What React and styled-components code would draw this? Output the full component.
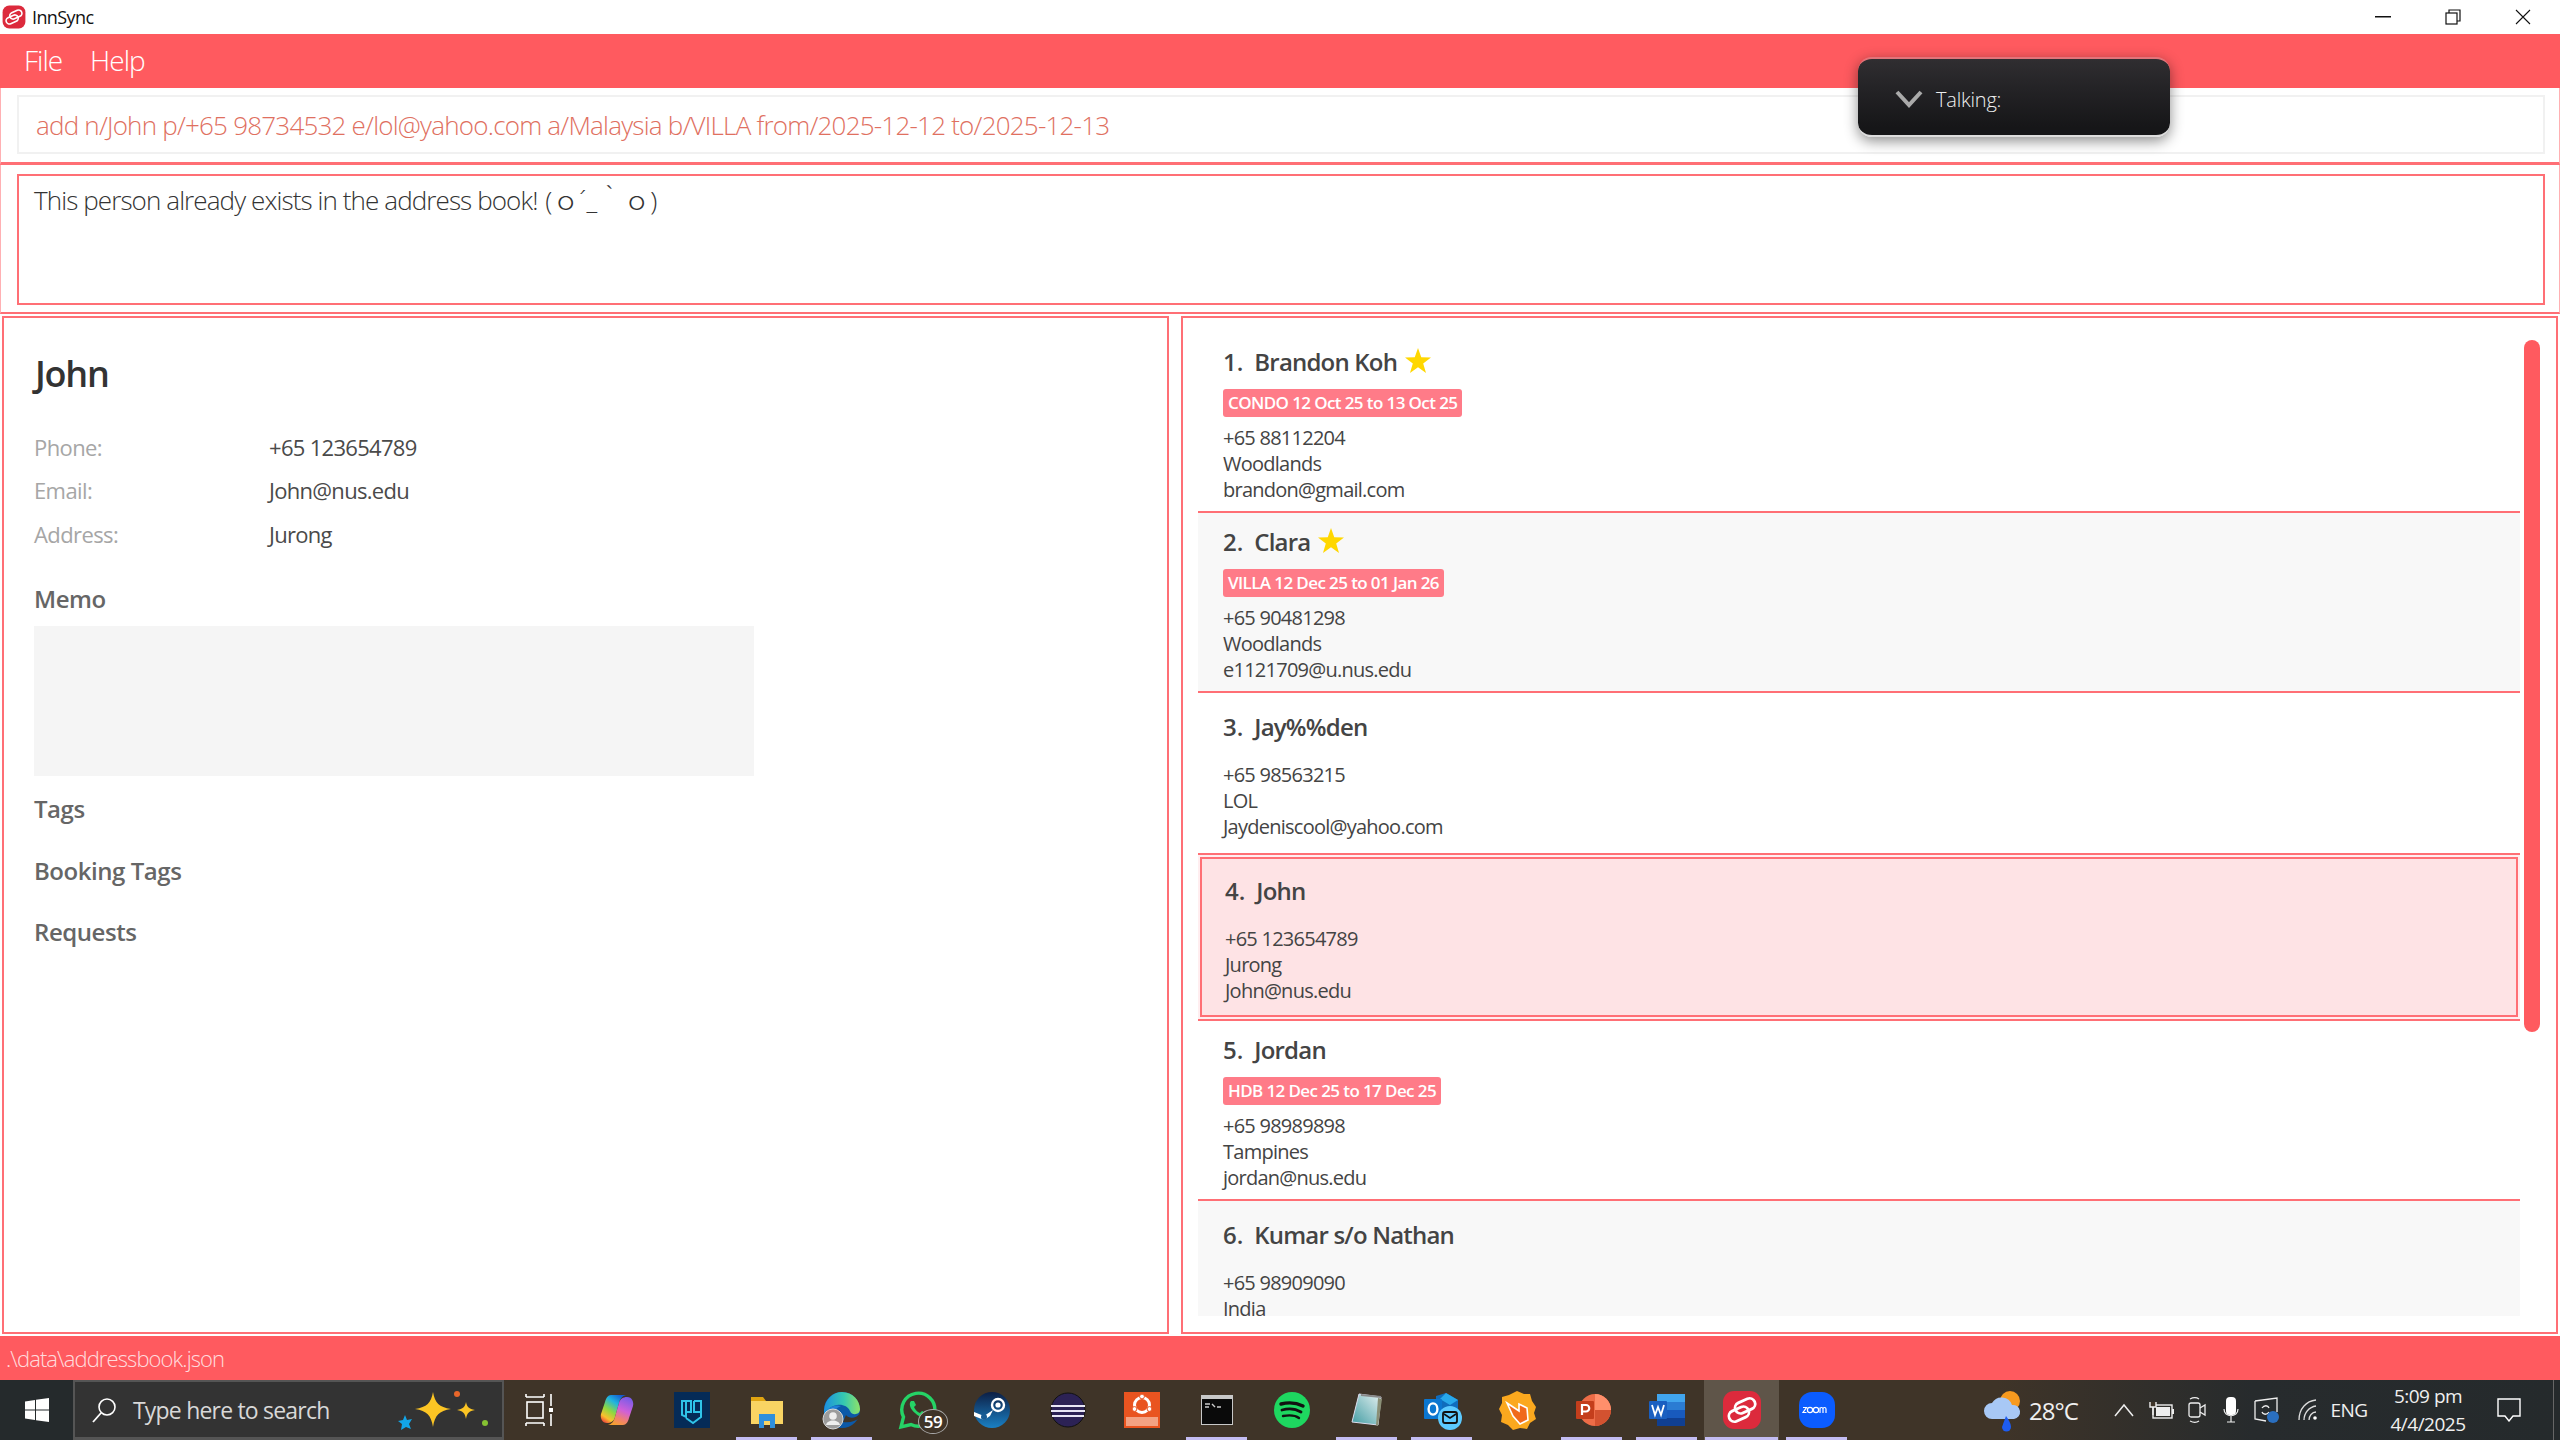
import React from "react";
import styled, { createGlobalStyle } from "styled-components";

const RED = "#ff5a5f";
const LINE = "#ff6f75";
const UI = '"Open Sans", "Noto Sans CJK JP", sans-serif';

const GlobalStyle = createGlobalStyle`
  html, body { margin: 0; padding: 0; background: #fff; }
  * { box-sizing: border-box; }
`;

const people = [
  { name: "Brandon Koh", star: true, badge: "CONDO 12 Oct 25 to 13 Oct 25", lines: ["+65 88112204", "Woodlands", "brandon@gmail.com"] },
  { name: "Clara", star: true, badge: "VILLA 12 Dec 25 to 01 Jan 26", lines: ["+65 90481298", "Woodlands", "e1121709@u.nus.edu"] },
  { name: "Jay%%den", lines: ["+65 98563215", "LOL", "Jaydeniscool@yahoo.com"] },
  { name: "John", selected: true, lines: ["+65 123654789", "Jurong", "John@nus.edu"] },
  { name: "Jordan", badge: "HDB 12 Dec 25 to 17 Dec 25", lines: ["+65 98989898", "Tampines", "jordan@nus.edu"] },
  { name: "Kumar s/o Nathan", lines: ["+65 98909090", "India"] },
];

const Page = styled.div`
  position: relative;
  width: 2560px;
  height: 1440px;
  overflow: hidden;
  display: flex;
  flex-direction: column;
  background: #fff;
  font-family: ${UI};
`;

const TitleBar = styled.div`
  height: 34px;
  display: flex;
  align-items: center;
  padding-left: 2px;
  font-size: 18px;
  color: #111;
`;

const AppName = styled.span`
  margin-left: 6px;
  letter-spacing: -0.6px;
`;

const WindowButtons = styled.div`
  margin-left: auto;
  margin-right: 2px;
  display: flex;
`;

const WindowButton = styled.div`
  width: 70px;
  height: 34px;
  display: flex;
  align-items: center;
  justify-content: center;
`;

const MenuBar = styled.div`
  height: 54px;
  background: ${RED};
  display: flex;
  align-items: center;
  gap: 28px;
  padding: 0 0 2px 24px;
  font-size: 28px;
  font-weight: 300;
  color: #fff;
  letter-spacing: -1px;
`;

const CommandPanel = styled.div`
  height: 77px;
  padding: 7px 14px 0 16px;
  border-left: 1px solid #ffb0b3;
  border-right: 1px solid #ffb0b3;
  border-bottom: 3px solid ${LINE};
`;

const CommandBox = styled.div`
  height: 59px;
  border: 2px solid #f1f1f1;
  display: flex;
  align-items: center;
  padding-left: 17px;
  font-size: 26px;
  font-weight: 300;
  color: #e0705f;
  letter-spacing: -0.78px;
  white-space: nowrap;
`;

const ResultPanel = styled.div`
  height: 149px;
  padding: 9px 14px 0 16px;
  border-left: 1px solid #ffb0b3;
  border-right: 1px solid #ffb0b3;
  border-bottom: 2px solid ${LINE};
`;

const ResultBox = styled.div`
  height: 131px;
  border: 2px solid ${LINE};
  padding: 6px 0 0 15px;
  font-size: 26px;
  line-height: 36px;
  font-weight: 300;
  color: #333;
  letter-spacing: -0.9px;
`;

const Kaomoji = styled.span`
  letter-spacing: 0.4px;
  margin-left: 2px;
`;

const Split = styled.div`
  height: 1022px;
  padding: 2px;
  display: flex;
  gap: 12px;
`;

const Panel = styled.div`
  width: ${(p) => p.$width}px;
  height: 1018px;
  border: 2px solid ${LINE};
`;

const Details = styled(Panel)`
  padding: 36px 0 0 30px;
`;

const DetailName = styled.div`
  font-size: 36px;
  line-height: 40px;
  font-weight: 600;
  color: #333;
  letter-spacing: -1.2px;
  margin-left: 1px;
`;

const Fields = styled.div`
  margin-top: 31px;
  margin-bottom: 23px;
`;

const Field = styled.div`
  display: flex;
  height: 43.5px;
  align-items: center;
  font-size: 22px;
`;

const FieldLabel = styled.span`
  width: 235px;
  color: #a6a6a6;
  font-weight: 500;
  letter-spacing: -0.6px;
`;

const FieldValue = styled.span`
  color: #4a4a4a;
  font-weight: 400;
  letter-spacing: -0.7px;
`;

const Heading = styled.div`
  font-size: 24px;
  line-height: 40px;
  font-weight: 600;
  color: #666;
  letter-spacing: -0.45px;
  margin-top: ${(p) => p.$top || 0}px;
`;

const MemoBox = styled.div`
  width: 720px;
  height: 150px;
  margin-top: 7px;
  background: #f5f5f5;
`;

const ListPanel = styled(Panel)`
  display: flex;
  padding: 15px 0 0 15px;
`;

const Viewport = styled.div`
  width: 1322px;
  height: 983px;
  overflow: hidden;
`;

const Card = styled.div`
  padding: ${(p) => (p.$selected ? "15px 0 15px 27px" : p.$badge ? "8px 0 8px 25px" : "13px 0 13px 25px")};
  background: ${(p) => (p.$selected ? "#fee3e5" : p.$odd ? "#f8f8f8" : "#fff")};
  border-bottom: 2px solid ${LINE};
  box-shadow: ${(p) => (p.$selected ? `inset 0 0 0 2px #ffeef0, inset 0 0 0 4px ${LINE}, inset 0 2px 0 0 ${LINE}` : "none")};
`;

const NameRow = styled.div`
  height: 40px;
  display: flex;
  align-items: center;
  font-size: 24px;
  font-weight: 600;
  color: #444;
  letter-spacing: -0.8px;
`;

const Index = styled.span`
  margin-right: 11px;
  letter-spacing: 0;
`;

const StarIcon = styled.svg`
  width: 26px;
  height: 26px;
  margin-left: 8px;
`;

const Badge = styled.div`
  display: table;
  height: 28px;
  margin-top: 8px;
  padding: 0 5px;
  border-radius: 3px;
  background: #ff7b88;
  color: #fff;
  font-size: 17px;
  line-height: 28px;
  font-weight: 600;
  letter-spacing: -0.6px;
  white-space: nowrap;
`;

const Lines = styled.div`
  margin-top: ${(p) => (p.$badge ? 8 : 16)}px;
  font-size: 20px;
  line-height: 26px;
  color: #444;
  letter-spacing: -0.75px;
`;

const Track = styled.div`
  margin: 7px 0 0 4px;
  width: 16px;
`;

const Thumb = styled.div`
  height: 692px;
  border-radius: 8px;
  background: ${RED};
`;

const StatusBar = styled.div`
  height: 44px;
  background: ${RED};
  display: flex;
  align-items: center;
  padding-left: 6px;
  font-size: 22px;
  font-weight: 300;
  color: rgba(255, 255, 255, 0.8);
  letter-spacing: -0.9px;
`;

const Taskbar = styled.div`
  height: 60px;
  display: flex;
  background: linear-gradient(90deg, #252a2c 0, #252a2c 3%, #3f3428 20%, #3f3428 78%, #272b2d 88%, #252a2c 100%);
`;

const Start = styled.div`
  width: 73px;
  display: flex;
  align-items: center;
  justify-content: center;
`;

const Search = styled.div`
  width: 431px;
  display: flex;
  align-items: center;
  padding-left: 16px;
  gap: 16px;
  background: #333;
  border: 2px solid #555;
  border-bottom-width: 3px;
  color: #d8d8d8;
  font-size: 23px;
  letter-spacing: -0.8px;
`;

const Sparkles = styled.svg`
  margin-left: auto;
  margin-right: 9px;
`;

const Slot = styled.div`
  position: relative;
  width: 75px;
  display: flex;
  align-items: center;
  justify-content: center;
  background: ${(p) => (p.$active ? "#5f5549" : "transparent")};

  &::after {
    content: "";
    display: ${(p) => (p.$running || p.$active ? "block" : "none")};
    position: absolute;
    bottom: 0;
    left: ${(p) => (p.$active ? 1 : 7)}px;
    right: ${(p) => (p.$active ? 1 : 7)}px;
    height: 3px;
    background: #c3bcf2;
  }
`;

const CountBadge = styled.span`
  position: absolute;
  left: 39px;
  top: 29px;
  width: 30px;
  height: 25px;
  border-radius: 50%;
  border: 1px solid #aaa;
  background: #3f3428;
  color: #fff;
  font-size: 17px;
  font-weight: 600;
  line-height: 23px;
  text-align: center;
  letter-spacing: -0.5px;
`;

const Tray = styled.div`
  margin-left: auto;
  display: flex;
  color: #f0f0f0;
`;

const TrayItem = styled.div`
  width: ${(p) => p.$w}px;
  display: flex;
  align-items: center;
  justify-content: center;
  font-size: ${(p) => p.$size || 20}px;
  letter-spacing: -0.5px;
`;

const WeatherItem = styled(TrayItem)`
  justify-content: flex-start;
  gap: 6px;
  font-size: 24px;
  letter-spacing: -1px;
`;

const Clock = styled(TrayItem)`
  flex-direction: column;
  font-size: 19px;
  line-height: 28px;
`;

const ShowDesktop = styled.div`
  width: 32px;
  position: relative;

  &::after {
    content: "";
    position: absolute;
    right: 6px;
    top: 0;
    bottom: 0;
    width: 1px;
    background: #666;
  }
`;

const TalkingPill = styled.div`
  position: absolute;
  left: 1858px;
  top: 57px;
  width: 312px;
  height: 80px;
  display: flex;
  align-items: center;
  gap: 13px;
  padding: 4px 0 0 37px;
  border-radius: 14px;
  border-top: 2px solid #e2747a;
  border-bottom: 2px solid #ddd;
  background: linear-gradient(180deg, #302e31 0, #252427 35%, #161618 90%);
  box-shadow: 0 4px 14px rgba(0, 0, 0, 0.45);
  color: #eee;
  font-size: 20px;
  font-weight: 300;
  letter-spacing: -0.2px;
`;

const Logo = ({ size = 24 }) => (
  <svg width={size} height={size} viewBox="0 0 40 40">
    <rect x="1" y="1" width="38" height="38" rx="11" fill="#dc2a3c" />
    <g fill="none" stroke="#fff" strokeWidth="2.8" transform="rotate(-24 20 20)">
      <rect x="5" y="17" width="21" height="11" rx="5.500" />
      <rect x="14" y="12" width="21" height="11" rx="5.500" />
    </g>
  </svg>
);

const Star = () => (
  <StarIcon viewBox="0 0 24 24">
    <polygon fill="#ffd700" points="12,0 15,8.6 24,8.8 16.8,14.3 19.4,23 12,17.8 4.6,23 7.2,14.3 0,8.8 9,8.6" />
  </StarIcon>
);

const Icon = ({ children, w = 40, h = 40 }) => (
  <svg width={w} height={h} viewBox={`0 0 ${w} ${h}`}>
    {children}
  </svg>
);

const PersonCard = ({ person, index }) => (
  <Card $badge={!!person.badge} $selected={person.selected} $odd={index % 2 === 1}>
    <NameRow>
      <Index>{index + 1}.</Index>
      {person.name}
      {person.star && <Star />}
    </NameRow>
    {person.badge && <Badge>{person.badge}</Badge>}
    <Lines $badge={!!person.badge}>
      {person.lines.map((line) => (
        <div key={line}>{line}</div>
      ))}
    </Lines>
  </Card>
);

const appIcons = [
  {
    key: "taskview",
    icon: (
      <Icon>
        <g fill="none" stroke="#fff" strokeWidth="1.6">
          <path d="M4 7h18M4 4v3M22 4v3M4 33h18M4 36v-3M22 36v-3" />
          <rect x="5" y="12" width="16" height="16" />
          <path d="M29 4v12M29 24v12" />
        </g>
        <rect x="27" y="18" width="4" height="4" fill="#fff" />
      </Icon>
    ),
  },
  {
    key: "copilot",
    icon: (
      <Icon>
        <defs>
          <linearGradient id="cpA" x1="0.8" y1="0" x2="0.2" y2="1">
            <stop offset="0" stopColor="#1457d0" />
            <stop offset="0.3" stopColor="#20b4e0" />
            <stop offset="0.6" stopColor="#8ed840" />
            <stop offset="0.85" stopColor="#fbc02d" />
            <stop offset="1" stopColor="#f0523a" />
          </linearGradient>
          <linearGradient id="cpB" x1="0.7" y1="0" x2="0.3" y2="1">
            <stop offset="0" stopColor="#7a5ce8" />
            <stop offset="0.45" stopColor="#d060d8" />
            <stop offset="0.75" stopColor="#f08070" />
            <stop offset="1" stopColor="#f5a030" />
          </linearGradient>
        </defs>
        <path d="M14 5H29C25 6 23 9 22 13L18 27C17 31 14 33 10 33C5 33 3 28 4 24L8 12C9 8 11 5 14 5Z" fill="url(#cpA)" />
        <path d="M26 35H11C15 34 17 31 18 27L22 13C23 9 26 7 30 7C35 7 37 12 36 16L32 28C31 32 29 35 26 35Z" fill="url(#cpB)" />
      </Icon>
    ),
  },
  {
    key: "powertoys",
    icon: (
      <Icon>
        <rect x="2" y="2" width="36" height="36" fill="#052b57" />
        <path d="M10 11v14l4 2V11zM12 11h7v11h-5M22 11h7v16l-8 6-7-5M22 11v11h6" fill="none" stroke="#2fc4e8" strokeWidth="2" />
      </Icon>
    ),
  },
  {
    key: "explorer",
    running: true,
    icon: (
      <Icon>
        <path d="M4 7h12l3 4v8H4z" fill="#e0a411" />
        <path d="M4 11h32v23H4z" fill="#f9d463" />
        <path d="M12 24h16v14h-5v-7h-6v7h-5z" fill="#2e8fdc" />
        <rect x="17" y="31" width="6" height="4" fill="#f9d463" />
      </Icon>
    ),
  },
  {
    key: "edge",
    running: true,
    icon: (
      <Icon>
        <defs>
          <linearGradient id="ed" x1="0" y1="0.5" x2="1" y2="0.5">
            <stop offset="0" stopColor="#1c8fe0" />
            <stop offset="0.55" stopColor="#35c8b0" />
            <stop offset="1" stopColor="#8fe268" />
          </linearGradient>
        </defs>
        <circle cx="20" cy="20" r="18" fill="#0c59a8" />
        <path d="M2 20C3 9 11 2 20 2C31 2 38 11 38 19C38 25 30 26 28 21C26 16 20 14 15 15C9 16 4 20 2 26Z" fill="url(#ed)" />
        <path d="M38 23C34 29 27 29 24 25L21 32C28 33 34 31 37 28Z" fill="#3f3428" />
        <path d="M2 25C5 18 12 14 19 16C13 18 11 23 13 30L5 32Z" fill="#1f7fd8" />
        <circle cx="11" cy="29" r="10" fill="#9c9c9c" stroke="#d8d8d8" />
        <circle cx="11" cy="26" r="3.800" fill="#eee" />
        <path d="M4 35c1-6 13-6 14 0z" fill="#eee" />
      </Icon>
    ),
  },
  {
    key: "whatsapp",
    badge: "59",
    icon: (
      <Icon>
        <path d="M4 37l2.500-10A16.500 16.500 0 1 1 14 34.500z" fill="none" stroke="#25d366" strokeWidth="3.4" />
        <path d="M14 11c-3 3 0 9 4 12 4 4 8 5 10 3l1-3-4-2-2 2c-3-1-5-4-6-6l2-2-2-4z" fill="#25d366" />
      </Icon>
    ),
  },
  {
    key: "steam",
    icon: (
      <Icon>
        <defs>
          <linearGradient id="st" x1="0" y1="0" x2="0" y2="1">
            <stop offset="0" stopColor="#0d1f45" />
            <stop offset="1" stopColor="#1a80c4" />
          </linearGradient>
        </defs>
        <circle cx="20" cy="20" r="18" fill="url(#st)" />
        <circle cx="26" cy="15" r="6" fill="none" stroke="#fff" strokeWidth="2.4" />
        <circle cx="26" cy="15" r="2.600" fill="#fff" />
        <path d="M2 22l10 4 9-6-3 6-6 4-10-4z" fill="#fff" />
        <circle cx="12" cy="27" r="3" fill="#1a5c94" />
      </Icon>
    ),
  },
  {
    key: "eclipse",
    icon: (
      <Icon>
        <path d="M19 2a18 18 0 0 0 0 36 17 17 0 0 1 0-36z" fill="#f7941e" />
        <circle cx="21" cy="20" r="17" fill="#2c2255" stroke="#111" />
        <path d="M4 15h34v2H4zM4 20h34v2H4zM5 25h32v2H5z" fill="#e8e6f4" />
      </Icon>
    ),
  },
  {
    key: "ubuntu",
    icon: (
      <Icon>
        <rect x="2" y="2" width="36" height="36" fill="#e95420" />
        <circle cx="20" cy="15" r="7.500" fill="none" stroke="#fff" strokeWidth="3" />
        <circle cx="20" cy="6.500" r="2.400" fill="#fff" stroke="#e95420" />
        <circle cx="12.500" cy="19" r="2.400" fill="#fff" stroke="#e95420" />
        <circle cx="27.500" cy="19" r="2.400" fill="#fff" stroke="#e95420" />
        <rect x="4" y="27" width="32" height="9" fill="#f3a283" />
      </Icon>
    ),
  },
  {
    key: "cmd",
    running: true,
    icon: (
      <Icon>
        <rect x="4" y="5" width="32" height="30" fill="#c8c8c8" />
        <rect x="5" y="9" width="30" height="25" fill="#0a0a0a" />
        <path d="M8 14h5M8 17h4M15 14l3 3M20 17h4" stroke="#ccc" strokeWidth="1.4" fill="none" />
      </Icon>
    ),
  },
  {
    key: "spotify",
    icon: (
      <Icon>
        <circle cx="20" cy="20" r="18" fill="#1ed760" />
        <g fill="none" stroke="#111" strokeLinecap="round">
          <path d="M9 14c8-2 16-1 22 2" strokeWidth="3.4" />
          <path d="M10 20c7-2 14-1 19 2" strokeWidth="2.8" />
          <path d="M11 26c6-1 12-1 16 2" strokeWidth="2.4" />
        </g>
      </Icon>
    ),
  },
  {
    key: "notepad",
    running: true,
    icon: (
      <Icon>
        <defs>
          <linearGradient id="np" x1="0" y1="1" x2="1" y2="0">
            <stop offset="0" stopColor="#3f9ba2" />
            <stop offset="1" stopColor="#e8f2f2" />
          </linearGradient>
        </defs>
        <path d="M12 4l22 3-3 28-26-3z" fill="url(#np)" stroke="#dde" />
        <path d="M14 5l20 2" stroke="#888" strokeWidth="2" />
        <path d="M31 8l4 1-4 27-2-1z" fill="#8a8f76" />
      </Icon>
    ),
  },
  {
    key: "outlook",
    running: true,
    icon: (
      <Icon>
        <path d="M14 6l10-3 12 7v14L22 30 14 24z" fill="#0f6cbd" />
        <path d="M24 3l12 7-8 5-10-6z" fill="#28a8ea" />
        <rect x="2" y="9" width="18" height="20" rx="1" fill="#0b76d0" />
        <ellipse cx="11" cy="19" rx="4.400" ry="5.600" fill="none" stroke="#fff" strokeWidth="2.4" />
        <circle cx="28" cy="28" r="12" fill="#5ccaff" />
        <rect x="21" y="22" width="14" height="11" rx="2" fill="none" stroke="#111" strokeWidth="1.8" />
        <path d="M22 24l6 4 6-4" fill="none" stroke="#111" strokeWidth="1.6" />
      </Icon>
    ),
  },
  {
    key: "hand",
    icon: (
      <Icon>
        <path d="M20 1l7 3 6 0 2 7 4 6-2 6 2 6-6 4-3 6-7-1-7 2-5-5-7-3 1-7-3-6 3-6 0-6 7-2z" fill="#fba81e" />
        <path d="M10 13l12 8 0-7 8 4 1 12-8 4-7-8z" fill="#f06a1c" stroke="#fff" strokeWidth="1.6" />
      </Icon>
    ),
  },
  {
    key: "powerpoint",
    running: true,
    icon: (
      <Icon>
        <circle cx="23" cy="20" r="16" fill="#ed6c47" />
        <path d="M23 4a16 16 0 0 1 16 16H23z" fill="#ff8f6b" />
        <path d="M23 20h16a16 16 0 0 1-16 16z" fill="#d35230" />
        <rect x="4" y="11" width="18" height="18" rx="1" fill="#c43e1c" />
        <path d="M10 25V15h4a3 3 0 0 1 0 6.500h-4" fill="none" stroke="#fff" strokeWidth="2.2" />
      </Icon>
    ),
  },
  {
    key: "word",
    running: true,
    icon: (
      <Icon>
        <rect x="10" y="4" width="28" height="8" fill="#41a5ee" />
        <rect x="10" y="12" width="28" height="8" fill="#2b7cd3" />
        <rect x="10" y="20" width="28" height="8" fill="#185abd" />
        <rect x="10" y="28" width="28" height="8" fill="#103f91" />
        <rect x="2" y="11" width="18" height="18" rx="1" fill="#1a5fc0" />
        <path d="M5 15l3 10 3-8 3 8 3-10" fill="none" stroke="#fff" strokeWidth="1.8" />
      </Icon>
    ),
  },
  { key: "innsync", active: true, icon: <Logo size={40} /> },
  {
    key: "zoom",
    running: true,
    icon: (
      <Icon>
        <rect x="2" y="2" width="36" height="36" rx="13" fill="#0b5cff" />
        <circle cx="13" cy="20" r="2.600" fill="none" stroke="#fff" strokeWidth="1.2" />
        <circle cx="19" cy="20" r="2.600" fill="none" stroke="#fff" strokeWidth="1.2" />
        <path d="M6 17.500h3.500L6 22.500h3.500M23 23v-5.500M23 19c0-2 3-2 3 0v4M26 19c0-2 3-2 3 0v4" fill="none" stroke="#fff" strokeWidth="1.2" />
      </Icon>
    ),
  },
];

const App = () => (
  <Page>
    <GlobalStyle />
    <TitleBar>
      <Logo />
      <AppName>InnSync</AppName>
      <WindowButtons>
        <WindowButton>
          <svg width="16" height="2"><rect width="16" height="1.5" fill="#111" /></svg>
        </WindowButton>
        <WindowButton>
          <svg width="16" height="16" viewBox="0 0 16 16">
            <g fill="none" stroke="#111" strokeWidth="1.2">
              <rect x="1" y="4" width="11" height="11" fill="#fff" />
              <path d="M4 4V1h11v11h-3" />
            </g>
          </svg>
        </WindowButton>
        <WindowButton>
          <svg width="16" height="16" viewBox="0 0 16 16">
            <path d="M1 1l14 14M15 1L1 15" fill="none" stroke="#111" strokeWidth="1.1" />
          </svg>
        </WindowButton>
      </WindowButtons>
    </TitleBar>
    <MenuBar>
      <span>File</span>
      <span>Help</span>
    </MenuBar>
    <CommandPanel>
      <CommandBox>add n/John p/+65 98734532 e/lol@yahoo.com a/Malaysia b/VILLA from/2025-12-12 to/2025-12-13</CommandBox>
    </CommandPanel>
    <ResultPanel>
      <ResultBox>This person already exists in the address book! <Kaomoji>(ｏ´_｀ｏ)</Kaomoji></ResultBox>
    </ResultPanel>
    <Split>
      <Details $width={1167}>
        <DetailName>John</DetailName>
        <Fields>
          <Field><FieldLabel>Phone:</FieldLabel><FieldValue>+65 123654789</FieldValue></Field>
          <Field><FieldLabel>Email:</FieldLabel><FieldValue>John@nus.edu</FieldValue></Field>
          <Field><FieldLabel>Address:</FieldLabel><FieldValue>Jurong</FieldValue></Field>
        </Fields>
        <Heading>Memo</Heading>
        <MemoBox />
        <Heading $top={13}>Tags</Heading>
        <Heading $top={22}>Booking Tags</Heading>
        <Heading $top={21}>Requests</Heading>
      </Details>
      <ListPanel $width={1377}>
        <Viewport>
          {people.map((person, index) => (
            <PersonCard key={person.name} person={person} index={index} />
          ))}
        </Viewport>
        <Track><Thumb /></Track>
      </ListPanel>
    </Split>
    <StatusBar>.\data\addressbook.json</StatusBar>
    <Taskbar>
      <Start>
        <svg width="24" height="24" viewBox="0 0 24 24">
          <path d="M0 3.400l10-1.400v9.400H0zM11 1.800L24 0v11.400H11zM0 12.600h10V22L0 20.600zM11 12.600h13V24l-13-1.800z" fill="#fff" />
        </svg>
      </Start>
      <Search>
        <svg width="26" height="26" viewBox="0 0 26 26">
          <circle cx="16" cy="10" r="8" fill="none" stroke="#fff" strokeWidth="1.6" />
          <path d="M10 16L2 25" stroke="#fff" strokeWidth="1.8" />
        </svg>
        <span>Type here to search</span>
        <Sparkles width="96" height="54" viewBox="0 0 96 54">
          <path d="M36 9c2 11 6 15 18 17-12 2-16 6-18 18-2-12-6-16-18-18 12-2 16-6 18-17z" fill="#fcc524" />
          <path d="M69 19c1 5 3 7 9 8-6 1-8 3-9 9-1-6-3-8-9-9 6-1 8-3 9-8z" fill="#fcc524" />
          <path d="M8 32l2 5 5-1-3 5 2 5-5-2-5 3 1-6-4-3 5-1z" fill="#12a5e8" />
          <circle cx="60" cy="11" r="3" fill="#e8662a" />
          <circle cx="88" cy="40" r="3" fill="#86c232" />
        </Sparkles>
      </Search>
      {appIcons.map((app) => (
        <Slot key={app.key} $running={app.running} $active={app.active}>
          {app.icon}
          {app.badge && <CountBadge>{app.badge}</CountBadge>}
        </Slot>
      ))}
      <Tray>
        <WeatherItem $w={123}>
          <svg width="40" height="44" viewBox="0 0 40 44">
            <circle cx="27" cy="13" r="10" fill="#f79a1f" />
            <path d="M9 31a8 8 0 0 1 0-16 11 11 0 0 1 20 2 7 7 0 0 1 2 14z" fill="#a8c8f5" />
            <path d="M23 28c3 4 5 8 5 11a4.500 4.500 0 0 1-9 0z" fill="#1d5cf0" />
          </svg>
          <span>28°C</span>
        </WeatherItem>
        <TrayItem $w={36}>
          <svg width="20" height="14"><path d="M1 13L10 2l9 11" fill="none" stroke="#eee" strokeWidth="1.5" /></svg>
        </TrayItem>
        <TrayItem $w={40}>
          <svg width="26" height="18" viewBox="0 0 26 18">
            <rect x="4" y="4" width="19" height="13" fill="none" stroke="#eee" strokeWidth="1.4" />
            <rect x="7" y="6" width="14" height="9" fill="#eee" />
            <rect x="23" y="8" width="2" height="5" fill="#eee" />
            <path d="M1 1v5h6V1M4 6v8" fill="#3f3428" stroke="#eee" strokeWidth="1.4" />
          </svg>
        </TrayItem>
        <TrayItem $w={30}>
          <svg width="18" height="26" viewBox="0 0 18 26">
            <g fill="none" stroke="#eee" strokeWidth="1.3">
              <rect x="1" y="6" width="11" height="14" rx="2" />
              <path d="M12 11l5-3v10l-5-3M2 2c4-2 6-2 9 0M2 24c4 2 6 2 9 0" />
            </g>
          </svg>
        </TrayItem>
        <TrayItem $w={38}>
          <svg width="16" height="26" viewBox="0 0 16 26">
            <rect x="3" y="0" width="10" height="18" rx="4" fill="#fff" />
            <path d="M1 12c0 9 14 9 14 0M8 19v6M4 25h8" fill="none" stroke="#eee" strokeWidth="1.2" />
          </svg>
        </TrayItem>
        <TrayItem $w={34}>
          <svg width="26" height="26" viewBox="0 0 26 26">
            <path d="M1 4l22-3v14M1 4v18l11 2" fill="none" stroke="#eee" strokeWidth="1.3" />
            <path d="M8 11c2-3 6-3 7 0M15 15c-2 3-6 3-7 0" fill="none" stroke="#eee" strokeWidth="1.3" />
            <circle cx="19" cy="20" r="6" fill="#2a6fc0" />
          </svg>
        </TrayItem>
        <TrayItem $w={48}>
          <svg width="20" height="22" viewBox="0 0 20 22">
            <g fill="none" stroke="#ddd" strokeWidth="1.3">
              <path d="M1 21C1 10 8 2 18 1" />
              <path d="M6 21c0-7 5-13 12-14" />
              <path d="M11 21c0-4 3-8 7-8" />
            </g>
            <circle cx="17" cy="19" r="1.800" fill="#fff" />
          </svg>
        </TrayItem>
        <TrayItem $w={34} $size={19}>ENG</TrayItem>
        <Clock $w={124}>
          <span>5:09 pm</span>
          <span>4/4/2025</span>
        </Clock>
        <TrayItem $w={38}>
          <svg width="24" height="24" viewBox="0 0 24 24">
            <path d="M1 1h22v17h-7l-4 5-4-5H1z" fill="none" stroke="#fff" strokeWidth="1.4" />
          </svg>
        </TrayItem>
        <ShowDesktop />
      </Tray>
    </Taskbar>
    <TalkingPill>
      <svg width="28" height="18" viewBox="0 0 28 18">
        <path d="M2 2l12 13L26 2" fill="none" stroke="#aaa" strokeWidth="4" />
      </svg>
      <span>Talking:</span>
    </TalkingPill>
  </Page>
);

export default App;
